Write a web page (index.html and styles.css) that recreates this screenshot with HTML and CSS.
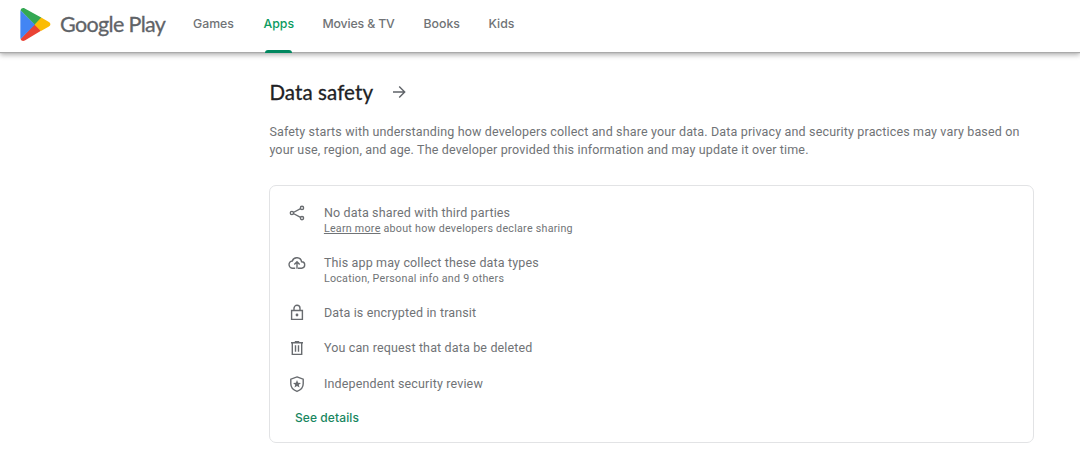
FILE: index.html
```
<!DOCTYPE html>
<html lang="en">
<head>
    <meta charset="UTF-8">
    <meta name="viewport" content="width=device-width, initial-scale=1.0">
    <title>Data safety - Google Play</title>
    <link rel="stylesheet" href="styles.css">
</head>
<body>
    <header class="header">
        <a class="logo" href="#">
            <svg class="logo-mark" viewBox="0 0 31 33">
                <path fill="#ea4335" d="M14.6 15.7L.6 31c.5 1.7 2.4 2.6 4.2 1.5L21 22.8z"/>
                <path fill="#fbbc04" d="M28.9 13.9L20.8 9.2l-6.6 7.4 6.800 6.400 7.900-4.600c2-1.100 2-3.500 0-4.500z"/>
                <path fill="#4285f4" d="M.6 2.200Q.4 2.800.4 3.500v26.100q0 .8.200 1.500L15 16.600z"/>
                <path fill="#34a853" d="M14.700 16.600L21.200 9.500 4.800.5C3-.5 1.100.4.600 2.200z"/>
            </svg>
            <span class="logo-text">Google Play</span>
        </a>
        <nav class="nav">
            <a class="games" href="#">Games</a>
            <a class="apps active" href="#">Apps</a>
            <a class="movies" href="#">Movies &amp; TV</a>
            <a class="books" href="#">Books</a>
            <a class="kids" href="#">Kids</a>
        </nav>
    </header>

    <main class="content">
        <div class="title">
            <h2>Data safety</h2>
            <svg class="arrow" viewBox="0 0 14 14">
                <path d="M1 7h11.500M7.200 1.500L12.700 7l-5.500 5.500"/>
            </svg>
        </div>
        <p class="intro">Safety starts with understanding how developers collect and share your data. Data privacy and security practices may vary based on<br>your use, region, and age. The developer provided this information and may update it over time.</p>

        <section class="card">
            <div class="row tall">
                <svg class="icon" viewBox="0 0 18 18">
                    <path d="M4.400 9L13.500 4.200M4.400 9l9.100 4.800"/>
                    <circle class="node" cx="3.900" cy="9" r="1.600"/>
                    <circle class="node" cx="14" cy="3.900" r="1.600"/>
                    <circle class="node" cx="14" cy="14.100" r="1.600"/>
                </svg>
                <div>
                    <p class="label">No data shared with third parties</p>
                    <p class="note"><a href="#">Learn more</a> about how developers declare sharing</p>
                </div>
            </div>
            <div class="row tall">
                <svg class="icon" viewBox="0 0 18 18">
                    <path d="M7.200 14.200H5A3.600 3.600 0 0 1 4.300 7 4.800 4.800 0 0 1 13.600 7.800 3.200 3.200 0 0 1 13.400 14.200H10M9 14.800V8M6.300 10.400L9 7.700l2.700 2.700"/>
                </svg>
                <div>
                    <p class="label">This app may collect these data types</p>
                    <p class="note">Location, Personal info and 9 others</p>
                </div>
            </div>
            <div class="row">
                <svg class="icon" viewBox="0 0 18 18">
                    <path d="M3.600 6.500h10.800v8.900H3.600zM6 6.500V4.300a3 3 0 0 1 6 0v2.200"/>
                    <circle class="fill" cx="9" cy="11" r="1.400"/>
                </svg>
                <p class="label">Data is encrypted in transit</p>
            </div>
            <div class="row">
                <svg class="icon" viewBox="0 0 18 18">
                    <path d="M4.300 4v11.400h9.400V4M3 3.700h12M6.800 2.800h4.400M7.500 6.300v6.500M10.500 6.300v6.500"/>
                </svg>
                <p class="label">You can request that data be deleted</p>
            </div>
            <div class="row">
                <svg class="icon" viewBox="0 0 18 18">
                    <path d="M9 1.900L15.200 4.200v4.600c0 3.500-2.600 6.300-6.200 7.600-3.600-1.300-6.200-4.100-6.200-7.600V4.200z"/>
                    <path class="fill" d="M9 5l1.100 2.700 2.900.2-2.200 1.900.7 2.800L9 11.100l-2.500 1.500.7-2.800L5 7.900l2.900-.2z"/>
                </svg>
                <p class="label">Independent security review</p>
            </div>
            <a class="details" href="#">See details</a>
        </section>
    </main>
</body>
</html>
```
FILE: styles.css
```
body {
    margin: 0;
    background: #fff;
    color: #707376;
    font-family: Roboto, Arial, sans-serif;
    overflow: hidden;
}

h2, p {
    margin: 0;
}

a {
    color: inherit;
    text-decoration: none;
}

.header {
    display: flex;
    height: 52px;
    padding-left: 20px;
    box-shadow: 0 1px 1px #aaa, 0 3px 5px rgba(0, 0, 0, 0.3);
}

.logo {
    display: flex;
    align-items: center;
    width: 173px;
    height: 48px;
}

.logo-mark {
    width: 31px;
    height: 33px;
    margin-right: 9px;
}

.logo-text {
    font-family: Lato, sans-serif;
    font-size: 21.5px;
    letter-spacing: -0.65px;
    white-space: nowrap;
    color: #5f6368;
    -webkit-text-stroke: 0.3px #5f6368;
}

.nav {
    display: flex;
    gap: 29px;
    font-family: Inter, sans-serif;
    font-size: 12.3px;
    font-weight: 500;
    line-height: 48px;
    white-space: nowrap;
}

.games {
    width: 42px;
}

.apps {
    width: 29.5px;
}

.movies {
    width: 72px;
    letter-spacing: -0.15px;
}

.books {
    width: 36px;
}

.active {
    display: flex;
    flex-direction: column;
    align-items: center;
    color: #0b9b61;
}

.active::after {
    content: "";
    width: 27px;
    height: 3px;
    margin-top: 2px;
    border-radius: 3px 3px 0 0;
    background: #01875f;
    flex: none;
}

.content {
    width: 765px;
    margin-left: 269.4px;
    padding-top: 27px;
}

.title {
    display: flex;
    align-items: center;
    height: 26px;
}

.title h2 {
    width: 122.5px;
    font-family: Lato, sans-serif;
    font-size: 20.5px;
    font-weight: 400;
    letter-spacing: 0.1px;
    color: #202124;
    -webkit-text-stroke: 0.3px #202124;
    white-space: nowrap;
}

.arrow {
    width: 14px;
    height: 14px;
    fill: none;
    stroke: #5f6368;
    stroke-width: 1.4;
}

.intro {
    margin-top: 18px;
    font-size: 12.5px;
    line-height: 17.8px;
    letter-spacing: 0.153px;
    white-space: nowrap;
}

.card {
    box-sizing: border-box;
    height: 258px;
    margin-top: 26px;
    padding: 18px 17.5px 0;
    border: 1px solid #e2e3e5;
    border-radius: 7px;
}

.row {
    display: flex;
    gap: 18px;
    height: 35.7px;
}

.row.tall {
    height: 50px;
}

.icon {
    width: 18px;
    height: 18px;
    fill: none;
    stroke: #686b6f;
    stroke-width: 1.4;
}

.icon .node {
    fill: #fff;
}

.icon .fill {
    fill: #686b6f;
    stroke: none;
}

.label {
    font-size: 12.5px;
    line-height: 18px;
    letter-spacing: 0.15px;
}

.note {
    font-size: 10.7px;
    line-height: 14px;
    letter-spacing: 0.26px;
}

.note a {
    text-decoration: underline;
}

.details {
    display: block;
    padding-left: 7px;
    font-family: Inter, sans-serif;
    font-size: 12px;
    font-weight: 500;
    letter-spacing: 0.1px;
    line-height: 14px;
    color: #18865f;
}
```
